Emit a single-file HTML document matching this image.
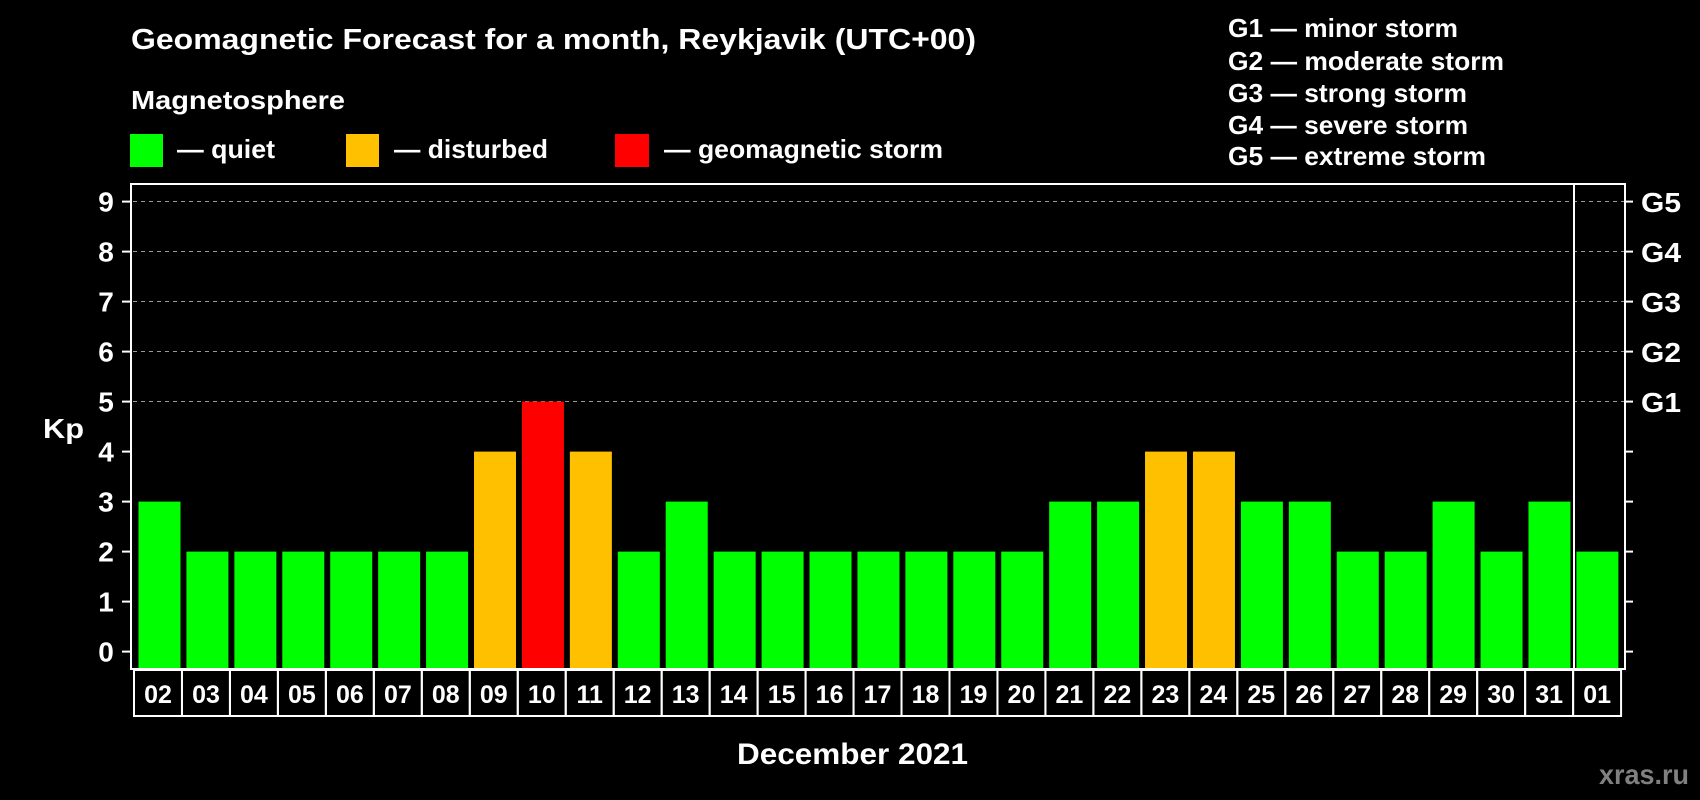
<!DOCTYPE html>
<html><head><meta charset="utf-8"><style>
html,body{margin:0;padding:0;background:#000;width:1700px;height:800px;overflow:hidden}
svg{display:block}
text{font-family:"Liberation Sans",Arial,sans-serif;font-weight:bold;fill:#fff}
</style></head><body>
<svg width="1700" height="800" viewBox="0 0 1700 800" xmlns="http://www.w3.org/2000/svg">
<rect width="1700" height="800" fill="#000"/>
<text x="131" y="49" font-size="29" textLength="845" lengthAdjust="spacingAndGlyphs">Geomagnetic Forecast for a month, Reykjavik (UTC+00)</text>
<text x="131" y="109" font-size="26" textLength="214" lengthAdjust="spacingAndGlyphs">Magnetosphere</text>
<rect x="130" y="134" width="33" height="33" fill="#00ff00"/>
<text x="177" y="158" font-size="26" textLength="98" lengthAdjust="spacingAndGlyphs">— quiet</text>
<rect x="346" y="134" width="33" height="33" fill="#ffc000"/>
<text x="394" y="158" font-size="26" textLength="154" lengthAdjust="spacingAndGlyphs">— disturbed</text>
<rect x="615" y="134" width="34" height="33" fill="#ff0000"/>
<text x="664" y="158" font-size="26" textLength="279" lengthAdjust="spacingAndGlyphs">— geomagnetic storm</text>
<g font-size="26">
<text x="1228" y="37" textLength="230" lengthAdjust="spacingAndGlyphs">G1 — minor storm</text>
<text x="1228" y="70" textLength="276" lengthAdjust="spacingAndGlyphs">G2 — moderate storm</text>
<text x="1228" y="102" textLength="239" lengthAdjust="spacingAndGlyphs">G3 — strong storm</text>
<text x="1228" y="134" textLength="240" lengthAdjust="spacingAndGlyphs">G4 — severe storm</text>
<text x="1228" y="165" textLength="258" lengthAdjust="spacingAndGlyphs">G5 — extreme storm</text>
</g>
<g stroke="#999" stroke-width="1" stroke-dasharray="4,4">
<line x1="133" x2="1624" y1="201.5" y2="201.5"/>
<line x1="133" x2="1624" y1="251.5" y2="251.5"/>
<line x1="133" x2="1624" y1="301.5" y2="301.5"/>
<line x1="133" x2="1624" y1="351.5" y2="351.5"/>
<line x1="133" x2="1624" y1="401.5" y2="401.5"/>
</g>
<g id="bars"></g>
<rect x="131" y="184" width="1494" height="485" fill="none" stroke="#fff" stroke-width="2"/>
<line x1="1574" x2="1574" y1="184" y2="669" stroke="#fff" stroke-width="2"/>
<g id="ticks" stroke="#fff" stroke-width="2"></g>
<g id="ylab" font-size="28" text-anchor="middle"></g>
<g font-size="28">
<text x="1641" y="212" textLength="40" lengthAdjust="spacingAndGlyphs">G5</text>
<text x="1641" y="262" textLength="40" lengthAdjust="spacingAndGlyphs">G4</text>
<text x="1641" y="312" textLength="40" lengthAdjust="spacingAndGlyphs">G3</text>
<text x="1641" y="362" textLength="40" lengthAdjust="spacingAndGlyphs">G2</text>
<text x="1641" y="412" textLength="40" lengthAdjust="spacingAndGlyphs">G1</text>
</g>
<text x="43" y="438" font-size="28" textLength="41" lengthAdjust="spacingAndGlyphs">Kp</text>
<g id="dates"></g>
<text x="737" y="764" font-size="30" textLength="231" lengthAdjust="spacingAndGlyphs">December 2021</text>
<text x="1599" y="784" font-size="28" textLength="90" lengthAdjust="spacingAndGlyphs" style="fill:#808080">xras.ru</text>
</svg>
<script>
(function(){
var NS="http://www.w3.org/2000/svg";
function el(t,a,p,txt){var e=document.createElementNS(NS,t);for(var k in a)e.setAttribute(k,a[k]);if(txt!=null)e.textContent=txt;document.getElementById(p).appendChild(e);}
var vals=[3,2,2,2,2,2,2,4,5,4,2,3,2,2,2,2,2,2,2,3,3,4,4,3,3,2,2,3,2,3,2];
var days=["02","03","04","05","06","07","08","09","10","11","12","13","14","15","16","17","18","19","20","21","22","23","24","25","26","27","28","29","30","31","01"];
var step=47.93;
for(var i=0;i<31;i++){
 var v=vals[i],c=v>=5?"#ff0000":(v==4?"#ffc000":"#00ff00");
 var x=138.5+i*step,by=651.6-50*v;
 el("rect",{x:x,y:by,width:42,height:668-by,fill:c},"bars");
 var cx=134+i*47.97;
 el("rect",{x:cx,y:670,width:47.97,height:46,fill:"none",stroke:"#fff","stroke-width":2},"dates");
 el("text",{x:cx+24,y:703,"font-size":"25","text-anchor":"middle"},"dates",days[i]);
}
for(var k=0;k<=9;k++){
 var y=651.6-50*k;
 el("line",{x1:122,x2:131,y1:y,y2:y},"ticks");
 el("line",{x1:1625,x2:1633,y1:y,y2:y},"ticks");
 el("text",{x:106,y:y+10},"ylab",String(k));
}
})();
</script>
</body></html>
